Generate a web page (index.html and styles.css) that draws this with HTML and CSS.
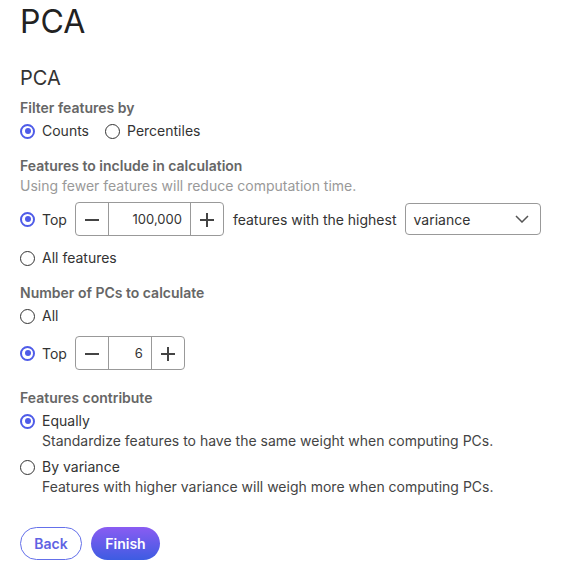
FILE: index.html
```html
<html lang="en">
<head>
    <meta charset="UTF-8">
    <meta name="viewport" content="width=device-width, initial-scale=1.0">
    <title>PCA</title>
    <link rel="stylesheet" href="styles.css">
</head>
<body>

    <h1 class="page-title">PCA</h1>
    <h2 class="step-title">PCA</h2>

    <!-- Filter -->
    <div class="section first">
        <div class="field-label">Filter features by</div>
        <div class="radio-row inline">
            <label class="radio"><span class="dot checked"></span>Counts</label>
            <label class="radio"><span class="dot"></span>Percentiles</label>
        </div>
    </div>

    <!-- Features to include -->
    <div class="section">
        <div class="field-label">Features to include in calculation</div>
        <div class="hint">Using fewer features will reduce computation time.</div>
        <div class="control-row top-row">
            <label class="radio"><span class="dot checked"></span>Top</label>
            <div class="stepper">
                <span class="step-btn minus"></span>
                <span class="step-value wide">100,000</span>
                <span class="step-btn plus"></span>
            </div>
            <span class="row-text">features with the highest</span>
            <div class="select">
                <span>variance</span>
                <svg width="14" height="8" viewBox="0 0 14 8"><path d="M1 1l6 6 6-6" fill="none" stroke="#555" stroke-width="1.5"/></svg>
            </div>
        </div>
        <div class="radio-row spaced">
            <label class="radio"><span class="dot"></span>All features</label>
        </div>
    </div>

    <!-- Number of PCs -->
    <div class="section">
        <div class="field-label">Number of PCs to calculate</div>
        <div class="radio-row">
            <label class="radio"><span class="dot"></span>All</label>
        </div>
        <div class="control-row pcs-row">
            <label class="radio"><span class="dot checked"></span>Top</label>
            <div class="stepper">
                <span class="step-btn minus"></span>
                <span class="step-value narrow">6</span>
                <span class="step-btn plus"></span>
            </div>
        </div>
    </div>

    <!-- Contribution -->
    <div class="section last">
        <div class="field-label">Features contribute</div>
        <div class="radio-row">
            <label class="radio"><span class="dot checked"></span>Equally</label>
        </div>
        <div class="desc">Standardize features to have the same weight when computing PCs.</div>
        <div class="radio-row gap-above">
            <label class="radio"><span class="dot"></span>By variance</label>
        </div>
        <div class="desc">Features with higher variance will weigh more when computing PCs.</div>
    </div>

    <div class="actions">
        <button class="btn-back">Back</button>
        <button class="btn-finish">Finish</button>
    </div>

</body>
</html>
```

FILE: styles.css
```css
/* Basic styling */
body {
    font-family: Inter, "Noto Sans", sans-serif;
    font-size: 14px;
    color: #333;
    background-color: #fff;
    margin: 0;
    padding: 2px 20px 0 20px;
}

.page-title {
    font-size: 32px;
    font-weight: 400;
    line-height: 40px;
    margin: 0;
    color: #222;
}

.step-title {
    font-size: 20px;
    font-weight: 400;
    line-height: 24px;
    margin: 24px 0 0 0;
    color: #333;
}

/* Sections */
.section {
    margin-top: 15px;
}

.section.first {
    margin-top: 8px;
}

.section.last {
    margin-top: 18px;
}

.field-label {
    font-weight: 600;
    color: #666;
    line-height: 20px;
}

.hint {
    color: #999;
    line-height: 20px;
}

.desc {
    color: #444;
    line-height: 19px;
    padding-left: 22px;
}

/* Radios */
.radio-row {
    display: flex;
    gap: 16px;
    margin-top: 3px;
    line-height: 20px;
}

.radio-row.spaced {
    margin-top: 12px;
}

.radio-row.gap-above {
    margin-top: 7px;
}

.radio {
    display: flex;
    align-items: center;
    gap: 7px;
}

.dot {
    box-sizing: border-box;
    width: 15px;
    height: 15px;
    border: 1.5px solid #333;
    border-radius: 50%;
    display: flex;
    align-items: center;
    justify-content: center;
}

.dot.checked {
    border: 2px solid #4f5ce8;
}

.dot.checked::after {
    content: '';
    width: 6px;
    height: 6px;
    border-radius: 50%;
    background-color: #4f5ce8;
}

/* Stepper rows */
.control-row {
    display: flex;
    align-items: center;
    gap: 8px;
}

.top-row {
    margin-top: 6px;
}

.pcs-row {
    margin-top: 10px;
}

.stepper {
    display: flex;
    height: 34px;
    box-sizing: border-box;
    border: 1px solid #999;
    border-radius: 4px;
}

.step-btn {
    width: 32px;
    position: relative;
}

.step-btn.minus {
    border-right: 1px solid #999;
}

.step-btn.plus {
    border-left: 1px solid #999;
}

.step-btn::before,
.step-btn.plus::after {
    content: '';
    position: absolute;
    left: 9px;
    top: 16px;
    width: 14px;
    height: 1.5px;
    background-color: #444;
}

.step-btn.plus::after {
    left: 15.25px;
    top: 9.5px;
    width: 1.5px;
    height: 14px;
}

.step-value {
    display: flex;
    align-items: center;
    justify-content: flex-end;
    padding-right: 8px;
    color: #333;
    font-size: 13px;
}

.step-value.wide {
    width: 73px;
}

.step-value.narrow {
    width: 34px;
}

.row-text {
    margin-left: 1px;
}

.select {
    box-sizing: border-box;
    width: 136px;
    height: 32px;
    border: 1px solid #999;
    border-radius: 4px;
    display: flex;
    align-items: center;
    justify-content: space-between;
    padding: 0 11px 0 8px;
}

/* Buttons */
.actions {
    display: flex;
    gap: 9px;
    margin-top: 31px;
}

.btn-back,
.btn-finish {
    font-family: Inter, "Noto Sans", sans-serif;
    font-size: 14px;
    font-weight: 600;
    height: 33px;
    border-radius: 17px;
    cursor: pointer;
}

.btn-back {
    width: 62px;
    background-color: #fff;
    border: 1.5px solid #6470ea;
    color: #5f63e3;
}

.btn-finish {
    width: 69px;
    border: none;
    color: #fff;
    background: linear-gradient(to bottom, #8a5cf2, #3d5ce2);
}
```
